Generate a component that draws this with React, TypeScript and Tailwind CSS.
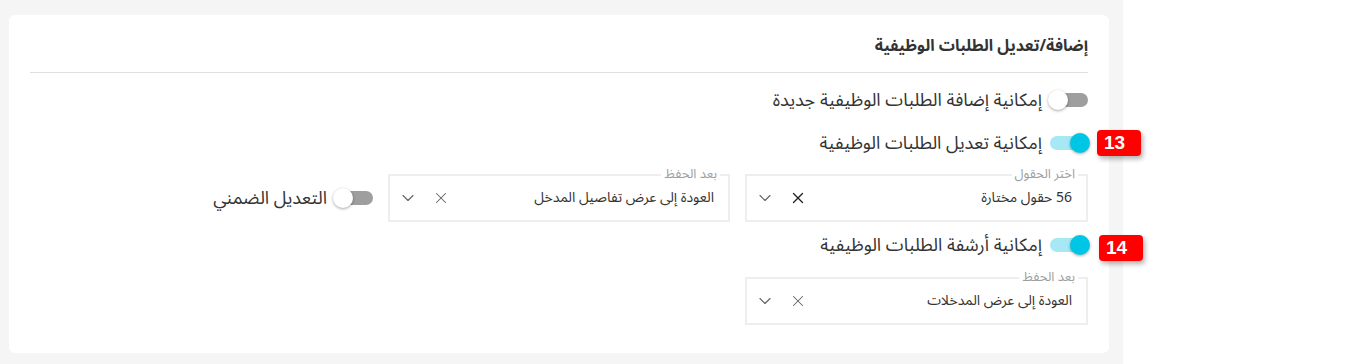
import { X, ChevronDown } from "lucide-react";

const font = {
  fontFamily: '"Noto Sans Arabic", "DejaVu Sans", sans-serif',
};

const Switch = ({ on }: { on: boolean }) => {
  return (
    <div
      className={`relative w-[38px] h-[14px] rounded-full shrink-0 ${
        on ? "bg-[#a6e9f5]" : "bg-[#9e9e9e]"
      }`}
      dir="ltr"
    >
      <div
        className={`absolute top-[-3px] w-[20px] h-[20px] rounded-full shadow-[0_1px_3px_rgba(0,0,0,0.35)] ${
          on ? "right-[-2px] bg-[#00c6e6]" : "left-[-2px] bg-white"
        }`}
      />
    </div>
  );
};

const Badge = ({ n, className }: { n: string; className: string }) => {
  return (
    <div
      dir="ltr"
      className={`absolute w-[44px] h-[26px] rounded-[4px] bg-[#ff0000] text-white font-bold text-[19px] leading-[26px] pl-[7px] text-left shadow-[2px_3px_5px_rgba(0,0,0,0.3)] ${className}`}
      style={{ fontFamily: '"Liberation Sans", Arial, sans-serif' }}
    >
      {n}
    </div>
  );
};

const ToggleRow = ({
  label,
  on,
  badge,
  badgeClass,
}: {
  label: string;
  on: boolean;
  badge?: string;
  badgeClass?: string;
}) => {
  return (
    <div className="relative flex items-center gap-[8px] h-[24px] w-fit">
      <Switch on={on} />
      <span className="text-[18px] leading-[24px] text-[#333]">{label}</span>
      {badge ? <Badge n={badge} className={badgeClass ?? ""} /> : null}
    </div>
  );
};

const Field = ({
  label,
  value,
  darkX,
  w,
}: {
  label: string;
  value: string;
  darkX?: boolean;
  w: string;
}) => {
  return (
    <div
      className={`relative h-[48px] ${w} border-2 border-[#eeeeee] flex items-center justify-between pr-[14px] pl-[8px] shrink-0`}
    >
      <span className="absolute top-[-9px] right-[8px] bg-white px-[3px] text-[13px] leading-[14px] text-[#9e9e9e]">
        {label}
      </span>
      <span className="text-[14px] leading-[18px] text-[#333]">{value}</span>
      <div className="flex items-center gap-[14px]">
        <X
          size={18}
          strokeWidth={darkX ? 1.8 : 1.4}
          className={darkX ? "text-[#222]" : "text-[#666]"}
        />
        <ChevronDown size={20} strokeWidth={1.4} className="text-[#666]" />
      </div>
    </div>
  );
};

export default function App() {
  return (
    <div className="flex w-[1352px] h-[364px] bg-white" style={font}>
      <div className="w-[1123px] h-full bg-[#f5f5f5] pt-[15px] pl-[9px] pr-[14px]">
        <div
          dir="rtl"
          className="bg-white rounded-[6px] h-[338px] px-[21px] pt-[21px]"
        >
          <h2 className="text-[16px] leading-[20px] font-bold text-[#333]">
            إضافة/تعديل الطلبات الوظيفية
          </h2>
          <div className="mt-[16px] border-t border-[#e0e0e0]" />

          <div className="mt-[15px]">
            <ToggleRow label="إمكانية إضافة الطلبات الوظيفية جديدة" on={false} />
          </div>
          <div className="mt-[19px]">
            <ToggleRow
              label="إمكانية تعديل الطلبات الوظيفية"
              on={true}
              badge="13"
              badgeClass="right-[-53px] top-[-1px]"
            />
          </div>

          <div className="mt-[19px] flex items-center gap-[15px]">
            <Field
              label="اختر الحقول"
              value="56 حقول مختارة"
              darkX
              w="w-[343px]"
            />
            <Field
              label="بعد الحفظ"
              value="العودة إلى عرض تفاصيل المدخل"
              w="w-[342px]"
            />
            <div className="flex items-center gap-[8px]">
              <Switch on={false} />
              <span className="text-[18px] leading-[24px] text-[#333]">
                التعديل الضمني
              </span>
            </div>
          </div>

          <div className="mt-[11px]">
            <ToggleRow
              label="إمكانية أرشفة الطلبات الوظيفية"
              on={true}
              badge="14"
              badgeClass="right-[-55px] top-[2px]"
            />
          </div>

          <div className="mt-[20px]">
            <Field
              label="بعد الحفظ"
              value="العودة إلى عرض المدخلات"
              w="w-[343px]"
            />
          </div>
        </div>
      </div>
      <div className="flex-1 bg-white" />
    </div>
  );
}
